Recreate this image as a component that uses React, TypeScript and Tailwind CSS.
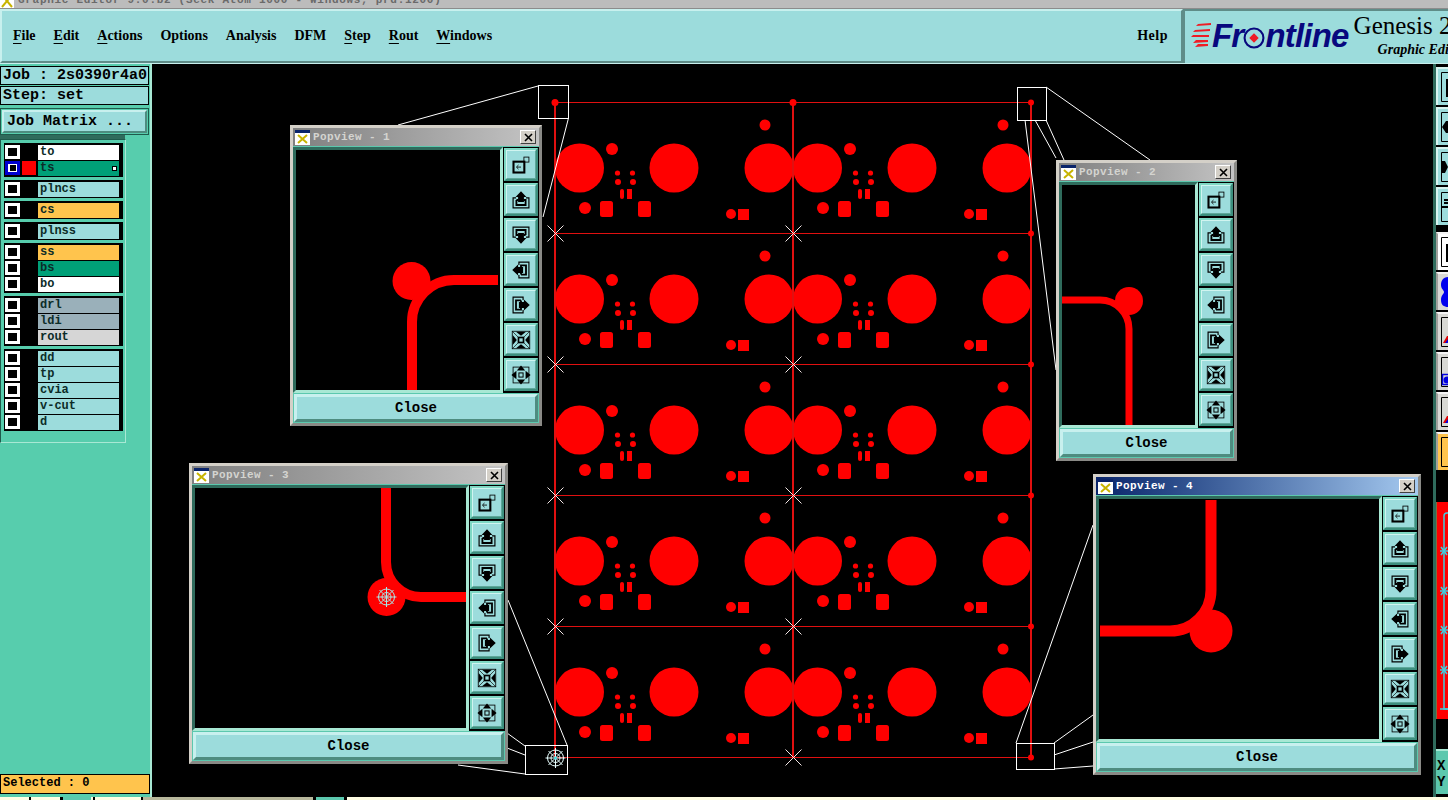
import React from 'react'

const menus = [
  ['F', 'ile'],
  ['E', 'dit'],
  ['A', 'ctions'],
  ['', 'Options'],
  ['', 'Analysis'],
  ['', 'DFM'],
  ['S', 'tep'],
  ['R', 'out'],
  ['W', 'indows'],
]

const layerGroups = [
  [
    { name: 'to', color: 'bg-white' },
    { name: 'ts', color: 'bg-[#00a078]', active: true },
  ],
  [{ name: 'plncs', color: 'bg-[#9cdcdc]' }],
  [{ name: 'cs', color: 'bg-[#ffc44d]' }],
  [{ name: 'plnss', color: 'bg-[#9cdcdc]' }],
  [
    { name: 'ss', color: 'bg-[#ffc44d]' },
    { name: 'bs', color: 'bg-[#00a078]' },
    { name: 'bo', color: 'bg-white' },
  ],
  [
    { name: 'drl', color: 'bg-[#9ab0ba]' },
    { name: 'ldi', color: 'bg-[#9ab0ba]' },
    { name: 'rout', color: 'bg-[#d6d6d6]' },
  ],
  [
    { name: 'dd', color: 'bg-[#9cdcdc]' },
    { name: 'tp', color: 'bg-[#9cdcdc]' },
    { name: 'cvia', color: 'bg-[#9cdcdc]' },
    { name: 'v-cut', color: 'bg-[#9cdcdc]' },
    { name: 'd', color: 'bg-[#9cdcdc]' },
  ],
]

const ToolIcon = ({ kind }: { kind: number }) => {
  if (kind === 0) {
    return (
      <svg width="20" height="20" viewBox="0 0 24 24" fill="none" stroke="black">
        <rect x="15.5" y="2.5" width="6" height="6" />
        <rect x="3" y="8" width="13" height="13" strokeWidth="2.5" />
        <path d="M12 14.5H7M9 12l-2.5 2.5L9 17" strokeWidth="1" />
      </svg>
    )
  }
  if (kind >= 1 && kind <= 4) {
    const rotate = [0, 0, 180, 270, 90][kind]
    return (
      <svg width="20" height="20" viewBox="0 0 24 24" fill="none" stroke="black">
        <g transform={`rotate(${rotate} 12 12)`}>
          <path d="M6 9.5H2.5V21.5H21.5V9.5H18" strokeWidth="1.4" />
          <path d="M6.5 12V18H17.5V12H15M9 12H6.5" strokeWidth="2.2" />
          <path d="M12 1.5L18.5 8.5H15.5V14.5H8.5V8.5H5.5Z" fill="black" stroke="none" />
        </g>
      </svg>
    )
  }
  if (kind === 5) {
    return (
      <svg width="20" height="20" viewBox="0 0 24 24" fill="none" stroke="black">
        <rect x="1.5" y="1.5" width="21" height="21" strokeWidth="1" />
        <path d="M2 2L22 22M22 2L2 22" strokeWidth="0.8" />
        <rect x="9" y="9" width="6" height="6" strokeWidth="2" fill="#9cdcdc" />
        <path d="M12 7L6 2H18ZM12 17L6 22H18ZM7 12L2 6V18ZM17 12L22 6V18Z" fill="black" stroke="none" />
      </svg>
    )
  }
  return (
    <svg width="20" height="20" viewBox="0 0 24 24" fill="none" stroke="black">
      <rect x="2.5" y="2.5" width="19" height="19" strokeWidth="1" />
      <rect x="9.5" y="9.5" width="5" height="5" strokeWidth="1.2" />
      <path d="M12 0.5L7 6.5H17ZM12 23.5L7 17.5H17ZM0.5 12L6.5 7V17ZM23.5 12L17.5 7V17Z" fill="black" stroke="none" />
    </svg>
  )
}

const ToolButton = ({ kind }: { kind: number }) => (
  <div className="h-[33px] w-[34px] border-2 border-t-[#7fd8c4] border-l-[#7fd8c4] border-r-[#3d8f7e] border-b-[#3d8f7e] bg-[#5cc8ae]">
    <div className="flex h-full w-full items-center justify-center border border-t-[#d0f4f0] border-l-[#d0f4f0] border-r-[#5ea89a] border-b-[#5ea89a] bg-[#9cdcdc]">
      <ToolIcon kind={kind} />
    </div>
  </div>
)

type PopviewProps = {
  title: string
  active?: boolean
  className: string
  viewBox: string
  children: React.ReactNode
}

const Popview = ({ title, active, className, viewBox, children }: PopviewProps) => (
  <div
    className={`absolute flex h-[301px] flex-col border-[3px] border-t-[#d4d0c8] border-l-[#d4d0c8] border-r-[#8a8a86] border-b-[#8a8a86] bg-[#5cc8ae] ${className}`}
  >
    <div
      className={`flex h-[18px] shrink-0 items-center justify-between pr-[3px] pl-[2px] ${
        active ? 'bg-gradient-to-r from-[#0a246a] to-[#a6caf0]' : 'bg-gradient-to-r from-[#808080] to-[#c4c4c4]'
      }`}
    >
      <div className="flex items-center gap-[3px]">
        <svg width="15" height="15" viewBox="0 0 15 15">
          <rect width="15" height="15" fill="white" />
          <rect width="15" height="3" fill="#0a246a" />
          <path d="M3 5L12 13M12 5L3 13" stroke="#c8b400" strokeWidth="2" />
        </svg>
        <span
          className={`pt-px font-['Liberation_Mono'] text-[11px] leading-none font-bold tracking-[0.4px] ${
            active ? 'text-white' : 'text-[#d4d4d0]'
          }`}
        >
          {title}
        </span>
      </div>
      <div className="flex h-[14px] w-[16px] items-center justify-center border border-t-white border-l-white border-r-[#404040] border-b-[#404040] bg-[#d4d0c8]">
        <svg width="9" height="9" viewBox="0 0 9 9">
          <path d="M1 1L8 8M8 1L1 8" stroke="black" strokeWidth="1.6" />
        </svg>
      </div>
    </div>
    <div className="mt-px flex h-[246px] shrink-0">
      <div className="flex-1 border-[3px] border-t-[#2f6b5c] border-l-[#2f6b5c] border-r-[#a8e8d4] border-b-[#a8e8d4] bg-black">
        <svg className="block h-full w-full" viewBox={viewBox}>
          {children}
        </svg>
      </div>
      <div className="flex w-[36px] flex-col gap-[2px] bg-black py-[1px] pl-[1px]">
        {[0, 1, 2, 3, 4, 5, 6].map((k) => (
          <ToolButton key={k} kind={k} />
        ))}
      </div>
    </div>
    <div className="mt-px flex-1 px-px pb-px">
      <button className="flex h-full w-full items-center justify-center border-[3px] border-t-[#c8f0ee] border-l-[#c8f0ee] border-r-[#4e8c80] border-b-[#4e8c80] bg-[#9cdcdc] pt-px font-['Liberation_Mono'] text-[14px] font-bold text-black">
        Close
      </button>
    </div>
  </div>
)

const Cross = ({ x, y }: { x: number; y: number }) => (
  <path
    d={`M${x - 8} ${y - 8}L${x + 8} ${y + 8}M${x + 8} ${y - 8}L${x - 8} ${y + 8}`}
    stroke="#f2e6e6"
    strokeWidth="1"
  />
)

const Target = ({ x, y, r, color }: { x: number; y: number; r: number; color: string }) => (
  <g stroke={color} strokeWidth="1" fill="none">
    <circle cx={x} cy={y} r={r * 0.45} />
    <circle cx={x} cy={y} r={r * 0.8} />
    <path
      d={`M${x - r} ${y}H${x + r}M${x} ${y - r}V${y + r}M${x - r * 0.7} ${y - r * 0.7}L${x + r * 0.7} ${y + r * 0.7}M${x + r * 0.7} ${y - r * 0.7}L${x - r * 0.7} ${y + r * 0.7}`}
    />
  </g>
)

const Cell = ({ dx, dy }: { dx: number; dy: number }) => (
  <g transform={`translate(${dx} ${dy})`} fill="#ff0000">
    <circle cx="579.5" cy="168" r="24.5" />
    <circle cx="674" cy="168" r="24.5" />
    <circle cx="769" cy="168" r="24.5" />
    <circle cx="765" cy="125" r="5.5" />
    <circle cx="612" cy="149" r="6" />
    <circle cx="617.5" cy="173" r="2.6" />
    <circle cx="632.5" cy="173" r="2.6" />
    <circle cx="618" cy="182" r="3" />
    <circle cx="633" cy="182" r="3" />
    <rect x="620" y="189" width="4" height="10" rx="2" />
    <rect x="627" y="189" width="5" height="10" />
    <circle cx="585" cy="208" r="6" />
    <rect x="600" y="201" width="13" height="16" rx="2.5" />
    <rect x="638" y="201" width="13" height="16" rx="2.5" />
    <circle cx="731" cy="214" r="5" />
    <rect x="738" y="209" width="11" height="11" />
  </g>
)

const Board = () => {
  const ys = [102, 233, 364, 495, 626, 757]
  const xs = [555, 793, 1031]
  return (
    <svg className="absolute inset-0 h-full w-full" viewBox="152 64 1281 733">
      {[0, 1].flatMap((c) =>
        [0, 1, 2, 3, 4].map((r) => <Cell key={`${c}-${r}`} dx={c * 238} dy={r * 131} />)
      )}
      <g stroke="#e01010" shapeRendering="crispEdges">
        {ys.map((y) => (
          <line key={y} x1="555" x2="1031" y1={y + 0.5} y2={y + 0.5} strokeWidth="1" />
        ))}
        {xs.map((x) => (
          <line key={x} x1={x} x2={x} y1="102" y2="757" strokeWidth="2" />
        ))}
      </g>
      <g fill="#ff0000">
        {ys.map((y) => (
          <circle key={y} cx="1031" cy={y + 0.5} r="3" />
        ))}
        <circle cx="555" cy="102.5" r="3.5" />
        <circle cx="793" cy="102.5" r="3.5" />
      </g>
      {[233, 364, 495, 626].map((y) => (
        <g key={y}>
          <Cross x={555.5} y={y + 0.5} />
          <Cross x={793.5} y={y + 0.5} />
        </g>
      ))}
      <Cross x={793.5} y={757.5} />
      <Target x={555.5} y={758} r={10} color="#e8ffff" />
      <circle cx="555.5" cy="758" r="1.5" fill="#40d8e0" />

      <g stroke="#ffffff" strokeWidth="1" fill="none">
        <rect x="538.5" y="85.5" width="30" height="33" />
        <rect x="1017.5" y="87.5" width="29" height="33" />
        <rect x="525.5" y="745.5" width="42" height="29" />
        <rect x="1016.5" y="743.5" width="38" height="26" />
        <path d="M398 125L538 86M543 217L568.5 118" />
        <path d="M1046 87L1150 160M1046 120L1064 160M1035 120L1056 158M1025 120L1056 370" />
        <path d="M508 600L567 745M507 733L525 746M507 748L525 755M458 765L525 774" />
        <path d="M1016 743L1093 525M1054 743L1093 715M1054 755L1093 742M1054 769L1093 766" />
      </g>
    </svg>
  )
}

const railFaces = [
  'bg-[#9cdcdc]',
  'bg-[#9cdcdc]',
  'bg-[#9cdcdc]',
  'bg-[#9cdcdc]',
  'bg-white',
  'bg-[#d8d8d4]',
  'bg-[#d8d8d4]',
  'bg-[#d8d8d4]',
  'bg-[#d8d8d4]',
  'bg-[#ffc44d]',
]

const RailIcon = ({ index }: { index: number }) => {
  const frame = <path d="M9 1.5H2.5V30.5H9" fill="none" stroke="black" strokeWidth="1" />
  return (
    <svg width="9" height="32" viewBox="0 0 9 32">
      {index !== 5 && index !== 7 && frame}
      {(index === 0 || index === 4) && <rect x="7" y="8" width="2" height="18" fill="black" />}
      {index === 1 && <path d="M3 16L7 10H9V22H7Z" fill="black" />}
      {index === 2 && <path d="M3 10H6L9 16L6 22H3Z" fill="black" />}
      {index === 3 && <path d="M5 9H9M5 12H9M3 16H9" fill="none" stroke="black" strokeWidth="2" />}
      {index === 5 && <path d="M9 1C4 1 2 5 2 9S5 14 5 16S2 19 2 24S5 31 9 31Z" fill="#0000ee" />}
      {(index === 6 || index === 8) && (
        <>
          <path d="M4 27L8 20L9 20V27Z" fill="#e00000" />
          <path d="M6 27L9 23V27Z" fill="#0000e0" />
        </>
      )}
      {index === 7 && (
        <>
          <path d="M9 1.5H2.5V30.5H9" fill="none" stroke="black" strokeWidth="1" />
          <rect x="3.5" y="18.5" width="9" height="10" fill="none" stroke="#0000e0" strokeWidth="1.5" />
          <circle cx="8" cy="24" r="3.5" fill="#0000e0" />
        </>
      )}
    </svg>
  )
}

const RightRail = () => (
  <div className="flex w-[15px] shrink-0 flex-col items-start overflow-hidden border-l-[3px] border-l-[#2f6b5c] bg-black pt-[3px]">
    <div className="flex flex-col gap-[2px] pb-[7px]">
      {railFaces.slice(0, 4).map((face, i) => (
        <div
          key={i}
          className={`flex h-[38px] w-[12px] items-center border-t-2 border-l-2 border-t-[#d8f4f0] border-l-[#d8f4f0] pl-[1px] ${face}`}
        >
          <RailIcon index={i} />
        </div>
      ))}
    </div>
    <div className="flex flex-col gap-[2px] pb-[3px]">
      {railFaces.slice(4).map((face, i) => (
        <div
          key={i}
          className={`flex h-[38px] w-[12px] items-center border-t-2 border-l-2 border-t-[#f4f4f4] border-l-[#a0a09c] pl-[1px] ${face}`}
        >
          <RailIcon index={i + 4} />
        </div>
      ))}
    </div>
    <div className="mt-[29px] h-[217px] w-[12px] shrink-0 overflow-hidden border-l border-l-[#807040] bg-[#ff0000]">
      <svg width="12" height="217" viewBox="0 0 12 217" fill="none" stroke="#40d0e0" strokeWidth="1.5">
        <path d="M12 11H10Q7 11 7 14V207H12" />
        <path d="M3 49H12M3 89H12M3 128H12M3 168H12M3 207H12" />
        <path d="M4 45L10 53M4 53L10 45M4 85L10 93M4 93L10 85M4 124L10 132M4 132L10 124M4 164L10 172M4 172L10 164" />
      </svg>
    </div>
    <div className="mt-[30px] flex h-[45px] w-[15px] shrink-0 -translate-x-[3px] flex-col justify-center border-t-2 border-t-[#a8e8d4] bg-[#5cc8ae] pt-[2px] pl-[4px] font-['Liberation_Mono'] text-[14px] leading-[16px] font-bold text-black">
      <span>X</span>
      <span>Y</span>
    </div>
  </div>
)

const LayerRow = ({ name, color, active }: { name: string; color: string; active?: boolean }) => (
  <div className="flex h-4 items-center bg-black">
    <div
      className={`ml-px flex h-[14px] w-[15px] items-center justify-center border-[3px] ${
        active ? 'border-[#0000d0] bg-white' : 'border-white bg-black'
      }`}
    >
      {active && <div className="h-[8px] w-[8px] border border-white bg-black" />}
    </div>
    <div className={`ml-[2px] h-[14px] w-[14px] ${active ? 'bg-[#ff0000]' : 'bg-black'}`} />
    <div
      className={`relative ml-[2px] flex h-[15px] w-[81px] items-center pl-[2px] font-['Liberation_Mono'] text-[12px] font-bold text-[#0c2c28] ${color}`}
    >
      {name}
      {active && (
        <div className="absolute top-[5px] right-[2px] h-[5px] w-[5px] border border-black bg-white" />
      )}
    </div>
  </div>
)

const LeftPanel = () => (
  <div className="flex w-[152px] shrink-0 flex-col border-r-2 border-r-[#a8e8d4] bg-[#57cdad] font-['Liberation_Mono'] font-bold text-black">
    <div className="bg-[#57cdad] pt-[2px] pr-px">
      <div className="flex h-[19px] items-center border border-black bg-[#9cdcdc] pt-[2px] pl-[2px] text-[15px] whitespace-nowrap">
        Job : 2s0390r4a0
      </div>
      <div className="mt-px flex h-[19px] items-center border border-black bg-[#9cdcdc] pt-[2px] pl-[2px] text-[15px] whitespace-nowrap">
        Step: set
      </div>
      <div className="mt-[3px] border border-[#1f5a4c] p-px">
        <div className="flex h-[23px] items-center border-2 border-t-[#c8f0ee] border-l-[#c8f0ee] border-r-[#4e8c80] border-b-[#4e8c80] bg-[#9cdcdc] pt-[2px] pl-[3px] text-[15px] whitespace-nowrap">
          Job Matrix ...
        </div>
      </div>
    </div>
    <div className="h-[4px] w-[125px] bg-[#2f6b5c]" />
    <div className="flex w-[126px] flex-col gap-[3px] border border-[#1f5a4c] border-r-[#a8e8d4] border-b-[#a8e8d4] py-[3px] pr-[2px] pb-[11px] pl-[3px]">
      {layerGroups.map((group, i) => (
        <div key={i} className="bg-black py-px">
          {group.map((layer) => (
            <LayerRow key={layer.name} {...layer} />
          ))}
        </div>
      ))}
    </div>
    <div className="flex-1" />
    <div className="mb-[3px] h-[20px] border border-black bg-[#ffc44d] pl-[2px] font-['Liberation_Mono'] text-[12px] leading-[17px] whitespace-nowrap">
      Selected : 0
    </div>
  </div>
)

const TopBar = () => (
  <div className="flex h-[55px] shrink-0 border-b border-b-[#c8f0ee]">
    <div className="flex w-[1183px] items-center justify-between border-[2px] border-t-[#c8f0ee] border-l-[#c8f0ee] border-r-[#5f8c88] border-b-[#5f8c88] bg-[#9cdcdc] pr-[13px] pb-[2px] pl-[11px] font-['Liberation_Serif'] text-[14px] font-bold text-black">
      <div className="flex gap-[18px]">
        {menus.map(([u, rest]) => (
          <span key={rest}>
            {u && <span className="underline underline-offset-[3px]">{u}</span>}
            {rest}
          </span>
        ))}
      </div>
      <span className="tracking-[0.5px]">Help</span>
    </div>
    <div className="relative flex flex-1 overflow-hidden border-t-2 border-l-2 border-t-[#5f8c88] border-l-[#5f8c88] bg-[#9cdcdc] pl-[5px] whitespace-nowrap">
      <svg width="22" height="24" viewBox="0 0 22 24" className="mt-[12px] shrink-0">
        <path
          d="M8 1L21 0V2L6 3ZM5 7L20 6V8L3 9ZM3 12H19V14H1ZM6 17H18V19L3 20ZM8 21H18V23L5 24Z"
          fill="#ee1c25"
        />
      </svg>
      <div className="mt-[8px] flex items-center self-start font-['Liberation_Sans'] text-[33px] leading-none font-bold tracking-[-0.8px] text-[#08087e] italic">
        <span>Fr</span>
        <svg width="22" height="22" viewBox="0 0 21 21" className="mt-[5px] shrink-0">
          <circle cx="10.5" cy="10.5" r="9" fill="none" stroke="#08087e" strokeWidth="2" />
          <path d="M10.5 6L15 10.5L10.5 15L6 10.5Z" fill="#ee1c25" />
        </svg>
        <span>ntline</span>
      </div>
      <div className="ml-[5px] self-start pt-[1px] font-['Liberation_Serif'] text-black">
        <div className="text-[25px] leading-[28px]">Genesis 2000</div>
        <div className="mt-[3px] pl-[24px] text-[14px] leading-[14px] font-bold italic">Graphic Editor</div>
      </div>
    </div>
  </div>
)

const App: React.FC = () => {
  return (
    <div className="flex h-[800px] w-[1448px] flex-col overflow-hidden bg-black">
      <div className="flex h-[9px] shrink-0 items-end overflow-hidden border-b border-b-[#8c8c8c] bg-[#bcbcbc]">
        <div className="flex h-[16px] shrink-0 translate-y-[1px] items-start">
          <svg width="14" height="16" viewBox="0 0 14 16">
            <rect width="14" height="16" fill="white" />
            <path d="M2 2L12 14M12 2L2 14" stroke="#c8b400" strokeWidth="2" />
          </svg>
          <span className="ml-[4px] font-['Liberation_Mono'] text-[11px] leading-[14px] font-bold tracking-[0.7px] whitespace-nowrap text-[#6a6a6a]">
            Graphic Editor 9.0.b2 (Seek Atom 1000 - Windows, prd.1200)
          </span>
        </div>
      </div>
      <TopBar />
      <div className="flex h-[733px] shrink-0">
        <LeftPanel />
        <div className="relative flex-1">
          <Board />
          <Popview title="Popview - 1" className="top-[61px] left-[138px] w-[252px]" viewBox="296 150 204 240">
            <path d="M412 390V322A42 42 0 0 1 454 280H498" fill="none" stroke="#ff0000" strokeWidth="10" />
            <circle cx="411.5" cy="281" r="19" fill="#ff0000" />
          </Popview>
          <Popview title="Popview - 2" className="top-[96px] left-[904px] w-[181px]" viewBox="1062 185 133 240">
            <path d="M1062 300H1100A29 29 0 0 1 1129 329V425" fill="none" stroke="#ff0000" strokeWidth="7" />
            <circle cx="1129" cy="301" r="14" fill="#ff0000" />
          </Popview>
          <Popview title="Popview - 3" className="top-[399px] left-[37px] w-[319px]" viewBox="195 488 271 240">
            <path d="M386 488V562A35 35 0 0 0 421 597H466" fill="none" stroke="#ff0000" strokeWidth="10" />
            <circle cx="386.5" cy="597" r="19" fill="#ff0000" />
            <Target x={386.5} y={597} r={10} color="#a8e8e8" />
          </Popview>
          <Popview active title="Popview - 4" className="top-[410px] left-[941px] w-[328px]" viewBox="1099 499 280 240">
            <path d="M1100 631H1170A41 41 0 0 0 1211 590V500" fill="none" stroke="#ff0000" strokeWidth="11" />
            <circle cx="1211" cy="631" r="21.5" fill="#ff0000" />
          </Popview>
        </div>
        <RightRail />
      </div>
      <div className="flex h-[3px] shrink-0 bg-[#fffee4]">
        <div className="ml-[29px] w-[2px] bg-black" />
        <div className="ml-[29px] w-[3px] bg-black" />
        <div className="w-[28px] bg-[#5cc8ae]" />
        <div className="ml-[2px] w-[2px] bg-black" />
        <div className="ml-[46px] w-[2px] bg-black" />
        <div className="w-[170px] bg-[#b8b89c]" />
        <div className="w-[3px] bg-black" />
        <div className="w-[28px] bg-[#5cc8ae]" />
        <div className="w-[3px] bg-black" />
      </div>
    </div>
  )
}

export default App
